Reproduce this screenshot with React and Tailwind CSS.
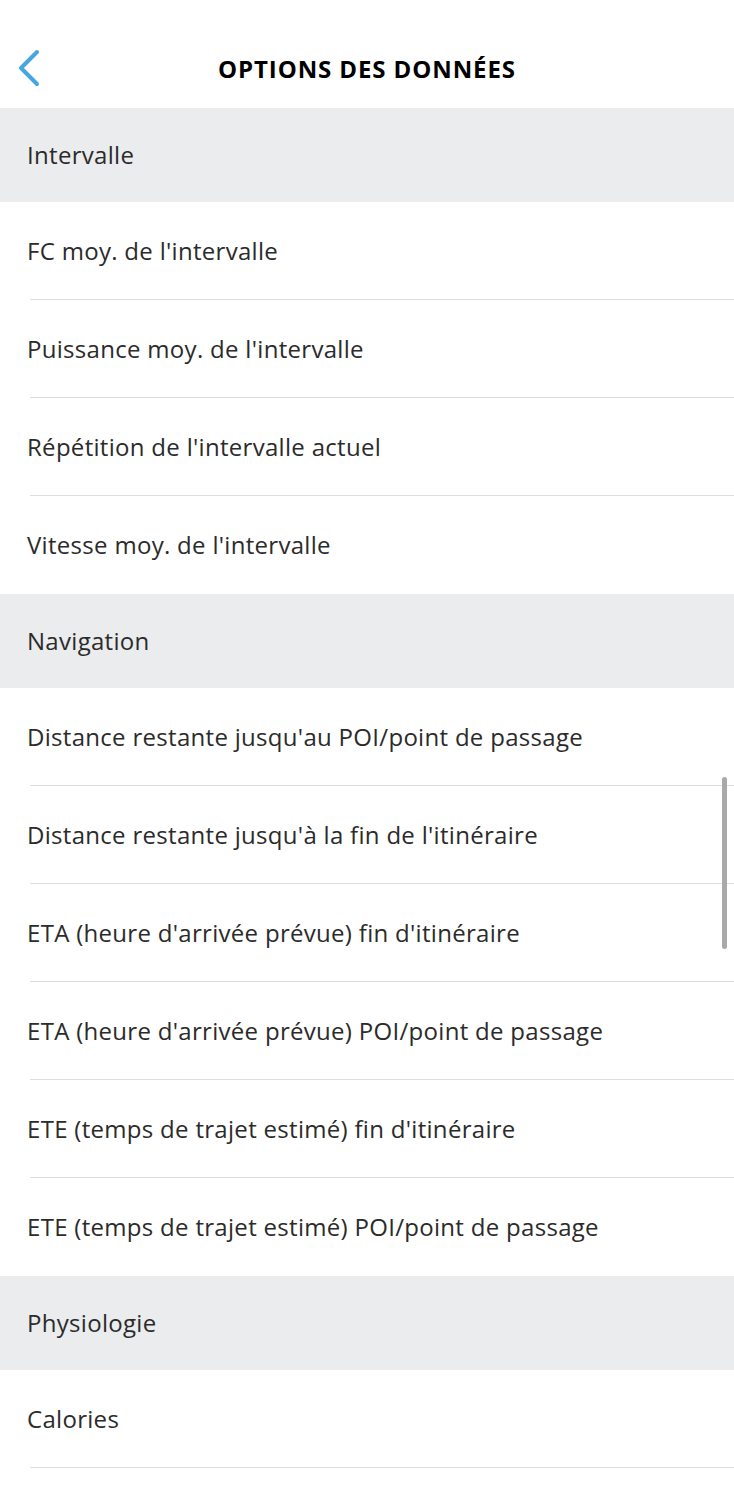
import React from 'react';

const sections = [
  {
    title: 'Intervalle',
    items: [
      "FC moy. de l'intervalle",
      "Puissance moy. de l'intervalle",
      "Répétition de l'intervalle actuel",
      "Vitesse moy. de l'intervalle",
    ],
  },
  {
    title: 'Navigation',
    items: [
      "Distance restante jusqu'au POI/point de passage",
      "Distance restante jusqu'à la fin de l'itinéraire",
      "ETA (heure d'arrivée prévue) fin d'itinéraire",
      "ETA (heure d'arrivée prévue) POI/point de passage",
      "ETE (temps de trajet estimé) fin d'itinéraire",
      "ETE (temps de trajet estimé) POI/point de passage",
    ],
  },
  {
    title: 'Physiologie',
    items: ['Calories'],
    open: true,
  },
];

const App = () => {
  return (
    <div
      className="relative w-[734px] h-[1500px] overflow-hidden bg-white text-[#2b2b2b]"
      style={{ fontFamily: '"Open Sans", "Noto Sans", sans-serif' }}
    >
      {/* header */}
      <div className="relative h-[108px] flex justify-center">
        <button className="absolute left-[14px] top-[48px] w-[30px] h-[40px] flex items-center justify-center">
          <svg width="26" height="38" viewBox="0 0 26 38" fill="none">
            <path d="M21 3 L5 19 L21 35" stroke="#45a6e0" strokeWidth="4" strokeLinecap="round" strokeLinejoin="round" />
          </svg>
        </button>
        <h1 className="mt-[53px] leading-[32px] text-[24px] font-bold text-black tracking-[0.9px]">OPTIONS DES DONNÉES</h1>
      </div>

      {sections.map((s) => (
        <div key={s.title}>
          <div className="h-[94px] bg-[#ebecee] flex items-center pl-[27px] text-[24px] tracking-[0.3px]">
            {s.title}
          </div>
          {s.items.map((item, i) => {
            const last = i === s.items.length - 1 && !s.open;
            return (
              <div key={item} className="h-[98px] flex flex-col">
                <div className="flex-1 flex items-center pl-[27px] text-[24px] tracking-[0.3px]">{item}</div>
                {!last && <div className="ml-[30px] h-[1px] bg-[#dedede]" />}
              </div>
            );
          })}
        </div>
      ))}

      {/* scrollbar */}
      <div className="absolute left-[722px] top-[777px] w-[5px] h-[172px] rounded-full bg-[#a9a9a9]" />
    </div>
  );
};

export default App;
